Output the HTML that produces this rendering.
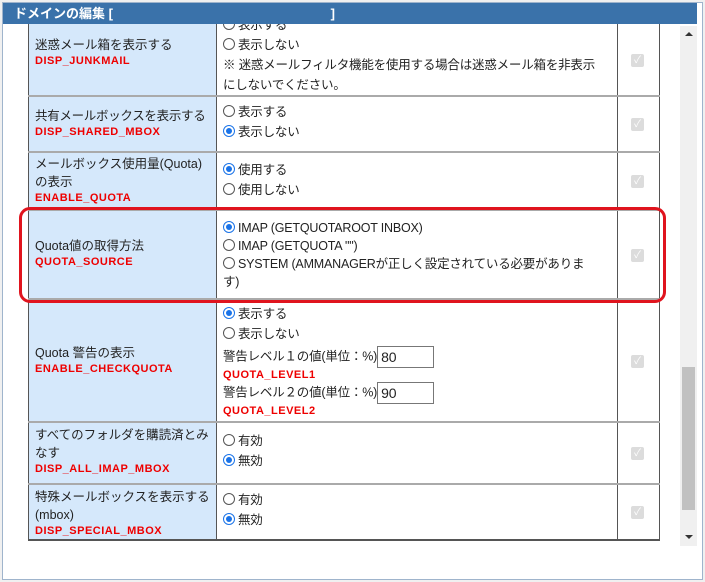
<!DOCTYPE html><html><head><meta charset="utf-8"><style>
*{box-sizing:border-box;margin:0;padding:0}
body{width:705px;height:582px;background:#f0f0f0;font-family:"Liberation Sans","Noto Sans CJK JP",sans-serif;font-size:12.5px;color:#222;position:relative;overflow:hidden}
.dlg{position:absolute;left:2px;top:2px;width:701px;height:578px;background:#fff;border:1px solid #9fb4cc}
.title{position:absolute;left:3px;top:3px;width:694px;height:21px;background:#3a72aa;color:#fff;font-weight:bold;font-size:13px;line-height:21px;padding-left:11px;z-index:5}
.row{position:absolute;left:28px;width:632px;border-bottom:2px solid #aaa}
.lab{position:absolute;left:0;top:0;bottom:0;width:189px;background:#d5e8fb;border-left:1px solid #555;border-right:1px solid #555;padding:6px 0 0 6px;line-height:18px}
.val{position:absolute;left:189px;top:0;bottom:0;width:400px;padding:3px 0 0 6px;line-height:20px;letter-spacing:-0.2px}
.chk{position:absolute;left:589px;top:0;bottom:0;width:43px;border-left:1px solid #555;border-right:1px solid #555}
.chk i{position:absolute;left:13px;top:50%;margin-top:-6px;width:13px;height:13px;background:#dcdcdc;border-radius:2px;color:#fff;font-style:normal;font-size:10px;line-height:13px;text-align:center}
.code{color:#e00;font-weight:bold;font-size:11px;letter-spacing:.5px;line-height:14px}
.r{display:inline-block;width:12px;height:12px;border:1px solid #555;border-radius:50%;vertical-align:-1px;margin-right:3px;position:relative}
.r.on{border:1px solid #1a73e8}
.r.on:after{content:"";position:absolute;left:2px;top:2px;width:6px;height:6px;border-radius:50%;background:#1a73e8}
.inp{display:inline-block;width:57px;height:22px;border:1px solid #777;vertical-align:middle;padding-left:3px;line-height:20px;font-size:14px}
</style></head><body>
<div class="dlg"></div>
<div class="title">ドメインの編集 [ <span style="margin-left:214px">]</span></div>
<div style="position:absolute;left:680px;top:26px;width:17px;height:520px;background:#f0f0f0"></div>
<div style="position:absolute;left:682px;top:367px;width:13px;height:143px;background:#c1c1c1"></div>
<div style="position:absolute;left:685px;top:32px;border-left:4px solid transparent;border-right:4px solid transparent;border-bottom:4px solid #333"></div>
<div style="position:absolute;left:685px;top:535px;border-left:4px solid transparent;border-right:4px solid transparent;border-top:4px solid #333"></div>

<div class="row" style="top:24px;height:73px"><div class="lab" style="padding-top:12px">迷惑メール箱を表示する<div class="code">DISP_JUNKMAIL</div></div><div class="val" style="top:-12px;padding-right:14px"><span class="r"></span>表示する<br><span class="r"></span>表示しない<br>※ 迷惑メールフィルタ機能を使用する場合は迷惑メール箱を非表示にしないでください。</div><div class="chk"><i>✓</i></div></div>
<div class="row" style="top:97px;height:56px"><div class="lab" style="padding-top:10px;letter-spacing:-0.3px">共有メールボックスを表示する<div class="code">DISP_SHARED_MBOX</div></div><div class="val" style="padding-top:5px"><span class="r"></span>表示する<br><span class="r on"></span>表示しない</div><div class="chk"><i>✓</i></div></div>
<div class="row" style="top:153px;height:58px"><div class="lab" style="padding-top:2px">メールボックス使用量(Quota)<br>の表示<div class="code">ENABLE_QUOTA</div></div><div class="val" style="padding-top:7px"><span class="r on"></span>使用する<br><span class="r"></span>使用しない</div><div class="chk"><i>✓</i></div></div>
<div class="row" style="top:211px;height:89px"><div class="lab" style="padding-top:26px">Quota値の取得方法<div class="code">QUOTA_SOURCE</div></div><div class="val" style="padding-top:8px;line-height:18px;padding-right:20px"><span class="r on"></span>IMAP (GETQUOTAROOT INBOX)<br><span class="r"></span>IMAP (GETQUOTA "")<br><span class="r"></span>SYSTEM (AMMANAGERが正しく設定されている必要があります)</div><div class="chk"><i>✓</i></div></div>
<div class="row" style="top:300px;height:123px"><div class="lab" style="padding-top:44px">Quota 警告の表示<div class="code">ENABLE_CHECKQUOTA</div></div><div class="val" style="padding-top:4px;line-height:20px"><span class="r on"></span>表示する<br><span class="r"></span>表示しない<br><div style="margin-top:2px">警告レベル１の値(単位：%)<span class="inp">80</span></div><div class="code">QUOTA_LEVEL1</div><div>警告レベル２の値(単位：%)<span class="inp">90</span></div><div class="code">QUOTA_LEVEL2</div></div><div class="chk"><i>✓</i></div></div>
<div class="row" style="top:423px;height:62px"><div class="lab" style="padding-top:3px">すべてのフォルダを購読済とみなす<div class="code">DISP_ALL_IMAP_MBOX</div></div><div class="val" style="padding-top:8px"><span class="r"></span>有効<br><span class="r on"></span>無効</div><div class="chk"><i>✓</i></div></div>
<div class="row" style="top:485px;height:56px;border-bottom-color:#555"><div class="lab" style="padding-top:3px">特殊メールボックスを表示する(mbox)<div class="code">DISP_SPECIAL_MBOX</div></div><div class="val" style="padding-top:5px"><span class="r"></span>有効<br><span class="r on"></span>無効</div><div class="chk"><i>✓</i></div></div>

<div style="position:absolute;left:19px;top:207px;width:647px;height:96px;border:3px solid #e0141e;border-radius:11px"></div>
</body></html>
